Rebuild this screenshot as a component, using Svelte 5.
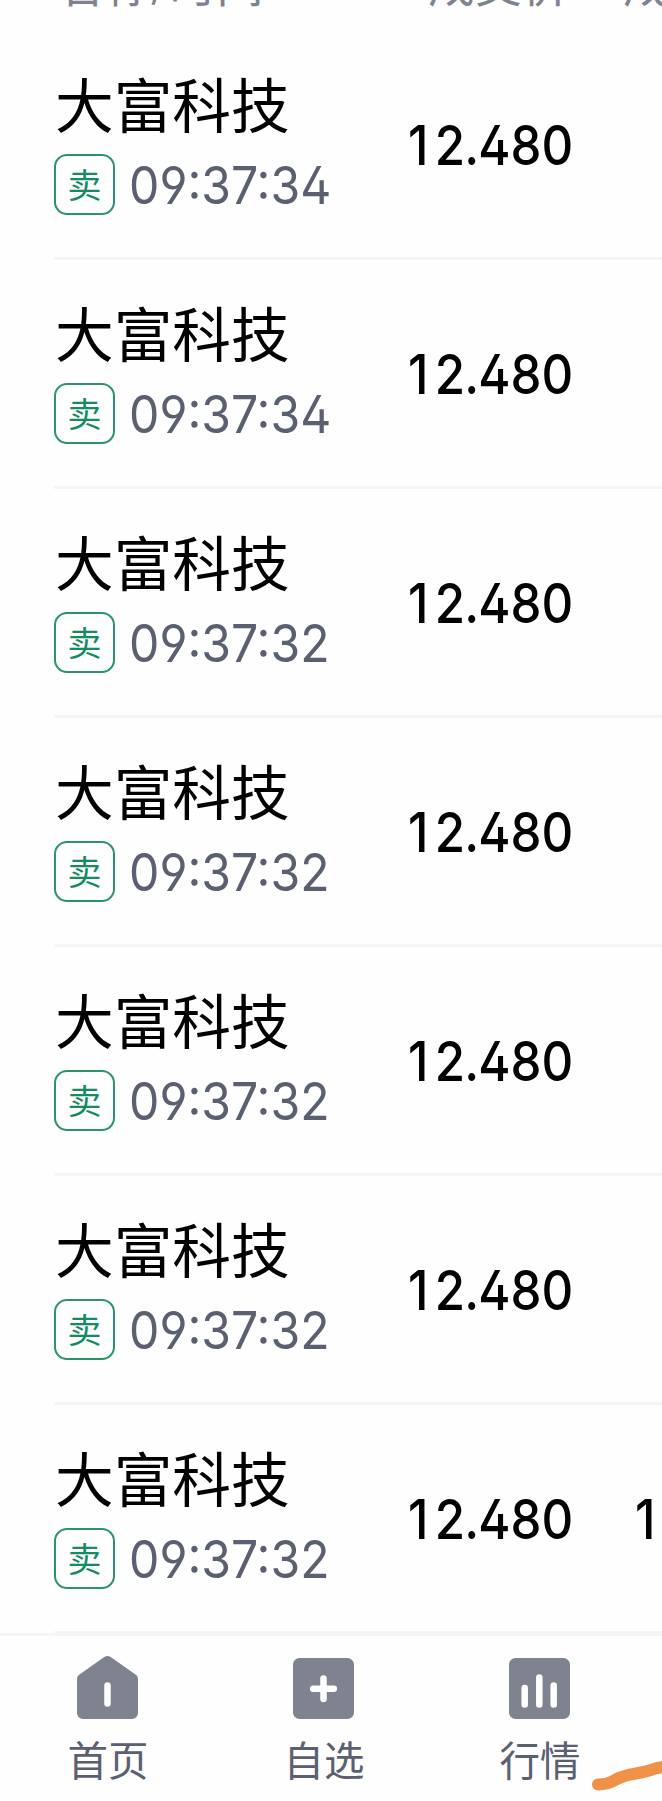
<script>
  const trades = [
    { time: '09:37:34', amount: '' },
    { time: '09:37:34', amount: '' },
    { time: '09:37:32', amount: '' },
    { time: '09:37:32', amount: '' },
    { time: '09:37:32', amount: '' },
    { time: '09:37:32', amount: '' },
    { time: '09:37:32', amount: '1' }
  ];
</script>

<div class="screen">
  <header>
    <span>名称<i>/</i>时间</span>
    <span>成交价</span>
    <span>成</span>
  </header>

  <main>
    {#each trades as trade}
      <article>
        <div class="stock">
          <div class="name">大富科技</div>
          <div class="detail">
            <span class="side">卖</span>
            <span class="time">{trade.time}</span>
          </div>
        </div>
        <div class="price"><span class="lead">1</span>2<span class="dot">.</span>480</div>
        <div class="amount">{trade.amount}</div>
      </article>
    {/each}
  </main>

  <nav>
    <div class="tab">
      <svg width="62" height="66" viewBox="0 0 62 66">
        <path fill="#7f838f" d="M27.300 3.100a5.500 5.500 0 0 1 6.400 0L58.500 20.600a5 5 0 0 1 2.500 4.400V59a6 6 0 0 1-6 6H6a6 6 0 0 1-6-6V25a5 5 0 0 1 2.500-4.400Z" />
        <path d="M30.500 31.500v18" />
      </svg>
      <span>首页</span>
    </div>
    <div class="tab">
      <svg width="62" height="66" viewBox="0 0 62 66">
        <rect y="4" width="61" height="61" rx="6.500" fill="#7f838f" />
        <path d="M30.500 24.500v20.500M20.200 34.700h20.600" />
      </svg>
      <span>自选</span>
    </div>
    <div class="tab">
      <svg width="62" height="66" viewBox="0 0 62 66">
        <rect y="4" width="61" height="61" rx="6.500" fill="#7f838f" />
        <path d="M15.700 34v16.500M30.300 23.500v27M44.700 31.500v19" />
      </svg>
      <span>行情</span>
    </div>
    <svg class="stroke" width="76" height="34" viewBox="0 0 76 34">
      <path d="M7 27.500Q17 27.500 24 23Q32 18.500 45 16.500Q57 14.500 66 11L80 8.500" />
    </svg>
  </nav>
</div>

<style>
  :global(body) { background: #fefefe; }
  .screen {
    width: 662px;
    height: 1801px;
    overflow: hidden;
    display: flex;
    flex-direction: column;
    position: relative;
    background: #fefefe;
    font-family: "Noto Sans CJK SC", sans-serif;
  }
  header {
    height: 31px;
    flex: none;
    display: grid;
    grid-template-columns: 371px 195px 1fr;
    grid-template-rows: 31px;
    align-items: end;
    padding: 0 0 0 57px;
    box-sizing: border-box;
    overflow: hidden;
    color: #7f838f;
    font-size: 47px;
    line-height: 60px;
    white-space: nowrap;
  }
  header span { margin-bottom: 19px; }
  header i { font-style: normal; position: relative; top: -6px; }
  main { flex: none; height: 1602px; overflow: visible; }
  article {
    height: 229px;
    box-sizing: border-box;
    margin-left: 54px;
    border-bottom: 3px solid #f4f5f9;
    display: grid;
    grid-template-columns: 354px 227px 1fr;
  }
  .stock { padding-top: 34px; }
  .name {
    height: 80px;
    line-height: 76px;
    padding-left: 1px;
    font-size: 58.700px;
    color: #000;
    white-space: nowrap;
  }
  .detail { display: flex; align-items: center; height: 78px; padding-top: 0; }
  .side {
    width: 61px;
    height: 61px;
    flex: none;
    box-sizing: border-box;
    border: 2px solid #2b9468;
    border-radius: 13px;
    color: #148c5e;
    font-size: 34px;
    line-height: 55px;
    text-align: center;
  }
  .time {
    margin: 2px 0 0 14px;
    font-family: Inter, sans-serif;
    font-size: 51.500px;
    font-feature-settings: "cv02", "cv04", "calt";
    color: #5b6071;
    transform: scaleX(.935);
    transform-origin: left;
    white-space: nowrap;
  }
  .price, .amount {
    padding-top: 79px;
    font-family: Inter, sans-serif;
    font-weight: 500;
    font-size: 55px;
    line-height: 70px;
    font-feature-settings: "cv02";
    color: #000;
    transform: scaleX(.895);
    transform-origin: left;
    white-space: nowrap;
  }
  .lead { margin-right: 7px; }
  .dot { margin: 0 -1px; }
  nav {
    flex: none;
    height: 168px;
    box-sizing: border-box;
    border-top: 3px solid #f4f5f9;
    background: #fefefe;
    display: flex;
    padding-top: 18px;
    position: relative;
  }
  .tab { width: 216px; flex: none; display: flex; flex-direction: column; align-items: center; }
  .tab span { font-size: 40.500px; line-height: 50px; margin-top: 14px; color: #5b6071; }
  .tab svg path:last-child { fill: none; stroke: #fff; stroke-width: 6.500; stroke-linecap: round; }
  .stroke { position: absolute; right: -5px; bottom: 10px; }
  .stroke path { fill: none; stroke: #f09148; stroke-width: 12; stroke-linecap: round; }
</style>
